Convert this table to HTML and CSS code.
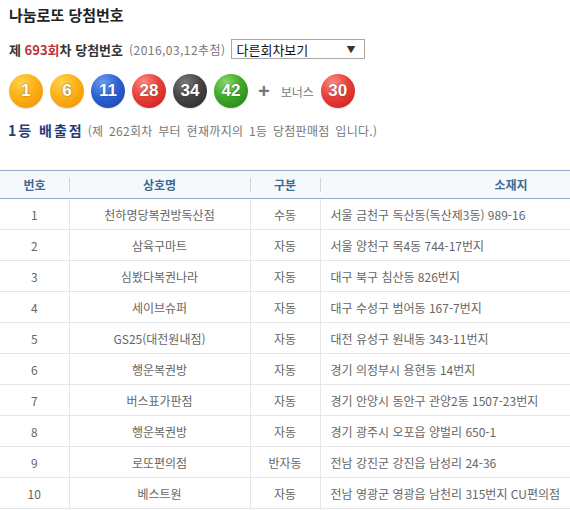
FILE: index.html
```html
<!DOCTYPE html>
<html lang="ko">
<head>
<meta charset="utf-8">
<title>나눔로또 당첨번호</title>
<link rel="stylesheet" href="styles.css">
</head>
<body>
<div class="page">
  <div class="top">
    <h1 class="title">나눔로또 당첨번호</h1>
    <div class="draw">
      <span class="draw-label">제 <em>693회</em>차 당첨번호</span>
      <span class="draw-date">(2016,03,12추첨)</span>
      <div class="select"><span>다른회차보기</span><span class="arrow">▼</span></div>
    </div>
    <div class="balls">
      <span class="ball yellow">1</span>
      <span class="ball yellow">6</span>
      <span class="ball blue">11</span>
      <span class="ball red">28</span>
      <span class="ball dark">34</span>
      <span class="ball green">42</span>
      <span class="plus">+</span>
      <span class="bonus-label">보너스</span>
      <span class="ball red">30</span>
    </div>
    <div class="sub">
      <strong class="sub-title">1등 배출점</strong>
      <span class="sub-note">(제 262회차 부터 현재까지의 1등 당첨판매점 입니다.)</span>
    </div>
  </div>
  <div class="table-wrap">
    <table class="shops">
      <colgroup>
        <col class="c-no"><col class="c-name"><col class="c-type"><col class="c-addr">
      </colgroup>
      <thead>
        <tr><th><span>번호</span></th><th><span>상호명</span></th><th><span>구분</span></th><th><span>소재지</span></th></tr>
      </thead>
      <tbody>
        <tr><td>1</td><td>천하명당복권방독산점</td><td>수동</td><td class="addr">서울 금천구 독산동(독산제3동) 989-16</td></tr>
        <tr><td>2</td><td>삼육구마트</td><td>자동</td><td class="addr">서울 양천구 목4동 744-17번지</td></tr>
        <tr><td>3</td><td>심봤다복권나라</td><td>자동</td><td class="addr">대구 북구 침산동 826번지</td></tr>
        <tr><td>4</td><td>세이브슈퍼</td><td>자동</td><td class="addr">대구 수성구 범어동 167-7번지</td></tr>
        <tr><td>5</td><td>GS25(대전원내점)</td><td>자동</td><td class="addr">대전 유성구 원내동 343-11번지</td></tr>
        <tr><td>6</td><td>행운복권방</td><td>자동</td><td class="addr">경기 의정부시 용현동 14번지</td></tr>
        <tr><td>7</td><td>버스표가판점</td><td>자동</td><td class="addr">경기 안양시 동안구 관양2동 1507-23번지</td></tr>
        <tr><td>8</td><td>행운복권방</td><td>자동</td><td class="addr">경기 광주시 오포읍 양벌리 650-1</td></tr>
        <tr><td>9</td><td>로또편의점</td><td>반자동</td><td class="addr">전남 강진군 강진읍 남성리 24-36</td></tr>
        <tr><td>10</td><td>베스트원</td><td>자동</td><td class="addr">전남 영광군 영광읍 남천리 315번지 CU편의점</td></tr>
      </tbody>
    </table>
  </div>
</div>
</body>
</html>
```
FILE: styles.css
```css
html, body {
  margin: 0;
  padding: 0;
  background: #fff;
  overflow: hidden;
}
body {
  font-family: "Noto Sans CJK KR", "Noto Sans", sans-serif;
  color: #333;
}
.page {
  width: 570px;
  overflow: hidden;
}
.top {
  padding: 6px 0 0 9px;
}
.title {
  margin: 0;
  font-size: 15px;
  line-height: 18px;
  font-weight: bold;
  color: #222;
}
.draw {
  margin-top: 15px;
  display: flex;
  align-items: center;
  height: 20px;
}
.draw-label {
  font-size: 13px;
  font-weight: bold;
  color: #333;
}
.draw-label em {
  font-style: normal;
  color: #c0303a;
}
.draw-date {
  margin-left: 6px;
  font-size: 12px;
  letter-spacing: 0.45px;
  color: #777;
}
.select {
  margin-left: 5px;
  width: 134px;
  height: 20px;
  box-sizing: border-box;
  border: 1px solid #a8a8a8;
  display: flex;
  align-items: center;
  justify-content: space-between;
  padding: 0 8px 0 5px;
  font-size: 13px;
  color: #111;
}
.select .arrow {
  font-size: 9px;
  color: #333;
}
.balls {
  margin-top: 15px;
  display: flex;
  align-items: center;
  gap: 7px;
  height: 34px;
}
.ball {
  width: 34px;
  height: 34px;
  border-radius: 50%;
  display: flex;
  align-items: center;
  justify-content: center;
  font-family: "Liberation Sans", Arial, sans-serif;
  font-weight: bold;
  font-size: 17px;
  color: #fff;
  text-shadow: 0 0 2px rgba(0,0,0,0.45);
  box-shadow: 0 1px 1px rgba(0,0,0,0.12);
}
.yellow { background: radial-gradient(circle at 35% 25%, #ffd24a 0%, #fbb117 45%, #ef8d00 100%); }
.blue { background: radial-gradient(circle at 35% 25%, #6a9cf0 0%, #2d62d4 45%, #1540a8 100%); }
.red { background: radial-gradient(circle at 35% 25%, #ff8a80 0%, #e8403a 45%, #c41b17 100%); }
.dark { background: radial-gradient(circle at 35% 25%, #7a7a7a 0%, #464646 45%, #262626 100%); }
.green { background: radial-gradient(circle at 35% 25%, #8ad86a 0%, #3eaa2a 45%, #1d7f14 100%); }
.plus {
  margin-left: 3px;
  font-family: "Liberation Sans", Arial, sans-serif;
  font-size: 20px;
  font-weight: bold;
  color: #777;
  line-height: 1;
}
.bonus-label {
  margin-left: 4px;
  font-size: 12px;
  color: #777;
}
.sub {
  margin-top: 13px;
  height: 18px;
  display: flex;
  align-items: center;
  margin-left: -1px;
}
.sub-title {
  font-size: 14px;
  font-weight: bold;
  color: #233f7a;
  letter-spacing: 2px;
}
.sub-note {
  margin-left: 4px;
  font-size: 12px;
  color: #777;
  letter-spacing: 0.3px;
  word-spacing: 2px;
}
.table-wrap {
  margin-top: 31px;
  width: 570px;
  overflow: hidden;
}
.shops {
  width: 702px;
  border-collapse: collapse;
  table-layout: fixed;
  font-size: 12px;
}
.c-no { width: 69px; }
.c-name { width: 181px; }
.c-type { width: 70px; }
.c-addr { width: 382px; }
.shops thead th {
  height: 27px;
  padding: 0;
  background: #f5f9fc;
  border-top: 1px solid #8eabc6;
  border-bottom: 1px solid #8eabc6;
  color: #3d6a94;
  font-weight: bold;
  text-align: center;
  position: relative;
}
.shops thead th + th::before {
  content: "";
  position: absolute;
  left: 0;
  top: 7px;
  height: 14px;
  width: 1px;
  background: #c9d7e3;
}
.shops tbody td {
  height: 30px;
  padding: 0;
  border-bottom: 1px solid #e6e6e6;
  border-left: 1px solid #e6e6e6;
  color: #666;
  text-align: center;
  white-space: nowrap;
}
.shops tbody td:first-child {
  border-left: none;
}
.shops tbody td.addr {
  text-align: left;
  padding-left: 10px;
}
```
